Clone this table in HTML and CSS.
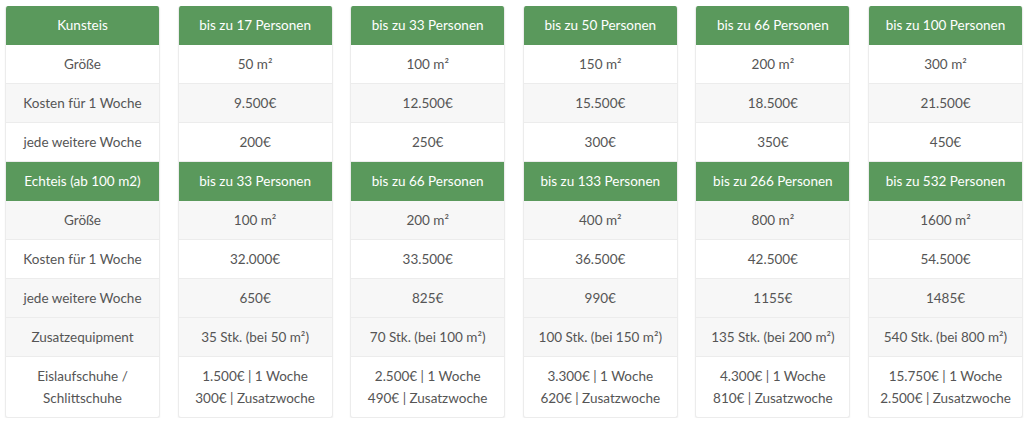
FILE: index.html
```html
<!DOCTYPE html>
<html lang="de">
<head>
<meta charset="utf-8">
<link rel="stylesheet" href="styles.css">
</head>
<body>
<div class="grid">
  <div class="card">
    <div class="cell head">Kunsteis</div>
    <div class="cell">Größe</div>
    <div class="cell alt">Kosten für 1 Woche</div>
    <div class="cell">jede weitere Woche</div>
    <div class="cell head">Echteis (ab 100 m2)</div>
    <div class="cell alt">Größe</div>
    <div class="cell">Kosten für 1 Woche</div>
    <div class="cell alt">jede weitere Woche</div>
    <div class="cell alt">Zusatzequipment</div>
    <div class="cell last">Eislaufschuhe /<br>Schlittschuhe</div>
  </div>
  <div class="card">
    <div class="cell head">bis zu 17 Personen</div>
    <div class="cell">50 m²</div>
    <div class="cell alt">9.500€</div>
    <div class="cell">200€</div>
    <div class="cell head">bis zu 33 Personen</div>
    <div class="cell alt">100 m²</div>
    <div class="cell">32.000€</div>
    <div class="cell alt">650€</div>
    <div class="cell alt">35 Stk. (bei 50 m²)</div>
    <div class="cell last">1.500€ | 1 Woche<br>300€ | Zusatzwoche</div>
  </div>
  <div class="card">
    <div class="cell head">bis zu 33 Personen</div>
    <div class="cell">100 m²</div>
    <div class="cell alt">12.500€</div>
    <div class="cell">250€</div>
    <div class="cell head">bis zu 66 Personen</div>
    <div class="cell alt">200 m²</div>
    <div class="cell">33.500€</div>
    <div class="cell alt">825€</div>
    <div class="cell alt">70 Stk. (bei 100 m²)</div>
    <div class="cell last">2.500€ | 1 Woche<br>490€ | Zusatzwoche</div>
  </div>
  <div class="card">
    <div class="cell head">bis zu 50 Personen</div>
    <div class="cell">150 m²</div>
    <div class="cell alt">15.500€</div>
    <div class="cell">300€</div>
    <div class="cell head">bis zu 133 Personen</div>
    <div class="cell alt">400 m²</div>
    <div class="cell">36.500€</div>
    <div class="cell alt">990€</div>
    <div class="cell alt">100 Stk. (bei 150 m²)</div>
    <div class="cell last">3.300€ | 1 Woche<br>620€ | Zusatzwoche</div>
  </div>
  <div class="card">
    <div class="cell head">bis zu 66 Personen</div>
    <div class="cell">200 m²</div>
    <div class="cell alt">18.500€</div>
    <div class="cell">350€</div>
    <div class="cell head">bis zu 266 Personen</div>
    <div class="cell alt">800 m²</div>
    <div class="cell">42.500€</div>
    <div class="cell alt">1155€</div>
    <div class="cell alt">135 Stk. (bei 200 m²)</div>
    <div class="cell last">4.300€ | 1 Woche<br>810€ | Zusatzwoche</div>
  </div>
  <div class="card">
    <div class="cell head">bis zu 100 Personen</div>
    <div class="cell">300 m²</div>
    <div class="cell alt">21.500€</div>
    <div class="cell">450€</div>
    <div class="cell head">bis zu 532 Personen</div>
    <div class="cell alt">1600 m²</div>
    <div class="cell">54.500€</div>
    <div class="cell alt">1485€</div>
    <div class="cell alt">540 Stk. (bei 800 m²)</div>
    <div class="cell last">15.750€ | 1 Woche<br>2.500€ | Zusatzwoche</div>
  </div>
</div>
</body>
</html>
```

FILE: styles.css
```css
html, body {
  margin: 0;
  padding: 0;
  background: #ffffff;
}
body {
  font-family: Lato, "Open Sans", sans-serif;
  font-size: 13.5px;
  color: #555555;
}
.grid {
  display: grid;
  grid-template-columns: repeat(6, 155px);
  column-gap: 17.6px;
  padding: 6px 0 0 5px;
}
.card {
  display: flex;
  flex-direction: column;
  border: 1px solid #ececec;
  border-top: none;
  border-radius: 3px;
  overflow: hidden;
  box-shadow: 0 1px 2px rgba(0, 0, 0, 0.06);
  background: #ffffff;
}
.cell {
  box-sizing: border-box;
  height: 39px;
  padding: 8px 4px;
  line-height: 22px;
  text-align: center;
  border-bottom: 1px solid #ececec;
  white-space: nowrap;
}
.cell.alt {
  background: #f7f7f7;
}
.cell.head {
  background: #5a995c;
  color: #ffffff;
  border-bottom: 1px solid #5a995c;
}
.cell.last {
  height: 60px;
  padding: 8px 2px;
  border-bottom: none;
}
```
